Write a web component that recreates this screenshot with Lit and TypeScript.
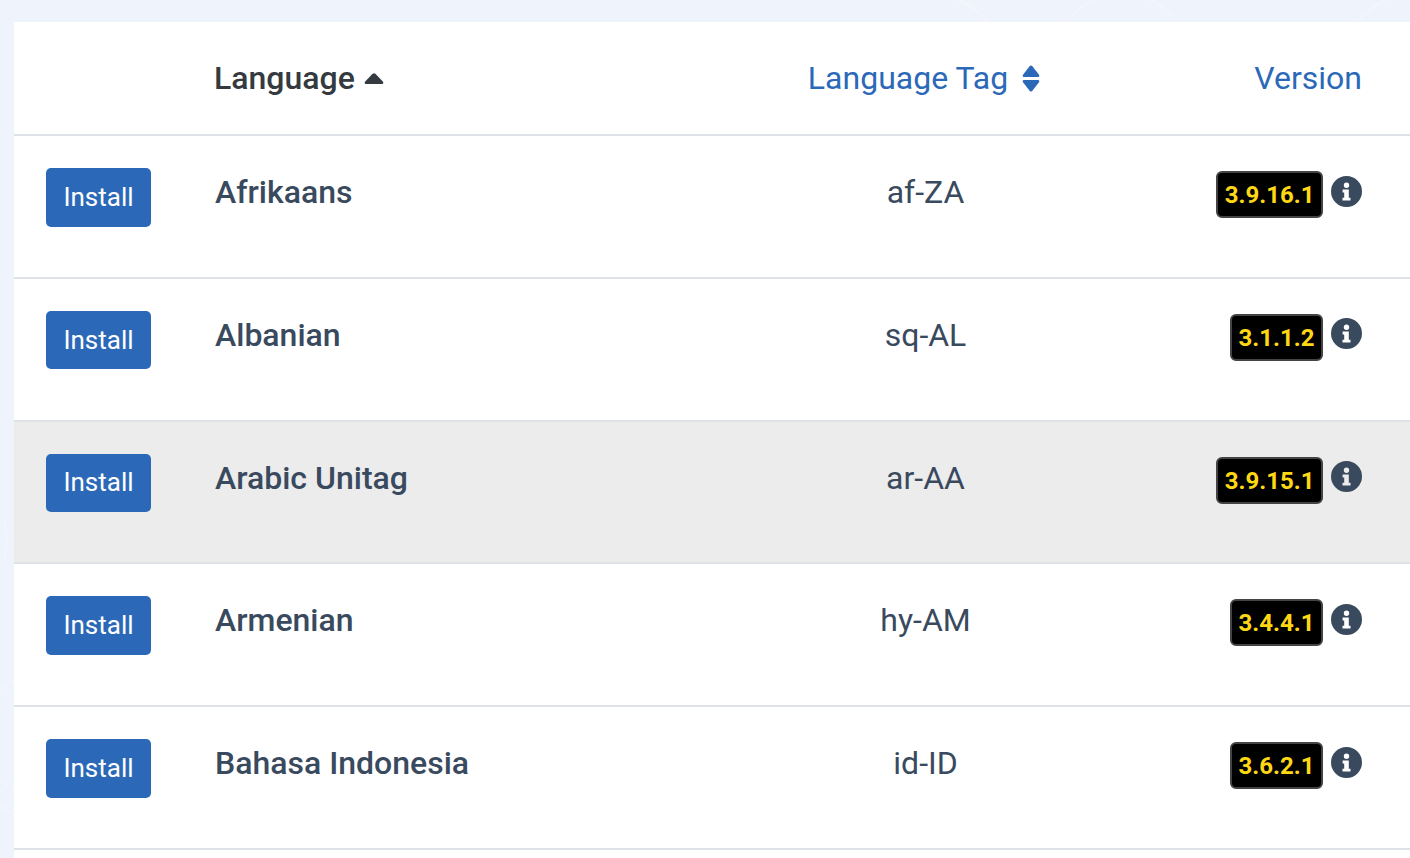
import { LitElement, html, css, svg } from "lit";
import { customElement } from "lit/decorators.js";

const rows = [
  { name: "Afrikaans", tag: "af-ZA", version: "3.9.16.1" },
  { name: "Albanian", tag: "sq-AL", version: "3.1.1.2" },
  { name: "Arabic Unitag", tag: "ar-AA", version: "3.9.15.1", hover: true },
  { name: "Armenian", tag: "hy-AM", version: "3.4.4.1" },
  { name: "Bahasa Indonesia", tag: "id-ID", version: "3.6.2.1" },
];

@customElement("app-root")
export class AppRoot extends LitElement {
  static styles = css`
    :host {
      display: block;
      position: relative;
      width: 1410px;
      height: 858px;
      overflow: hidden;
      background: #eff4fc;
      font-family: Roboto, "Liberation Sans", sans-serif;
    }
    .decor {
      position: absolute;
      inset: 0;
      width: 1410px;
      height: 858px;
      fill: none;
      stroke: #f3f6fc;
      stroke-width: 1.5;
    }
    .page {
      position: relative;
      padding: 22px 0 0 14px;
    }
    .card {
      background: #fff;
      height: 836px;
    }
    .row {
      display: grid;
      grid-template-columns: 201px 620px 181px 394px;
      height: 142.75px;
      box-sizing: border-box;
      border-bottom: 2px solid #dee2e6;
      color: #3a4a5e;
      font-size: 32px;
    }
    .row.head {
      height: 114px;
      align-items: center;
    }
    .row.hover {
      background: #ececec;
    }
    .cell {
      padding-top: 34px;
      line-height: 45px;
      white-space: nowrap;
    }
    .btn-cell {
      padding: 32px 0 0 32px;
    }
    button {
      display: block;
      width: 105px;
      height: 58.5px;
      border: 0;
      border-radius: 5px;
      background: #2b69b8;
      color: #fff;
      font: 400 26px Roboto, sans-serif;
      padding: 0 0 1px;
    }
    .name {
      font-weight: 500;
    }
    .tag {
      text-align: center;
    }
    .version {
      display: flex;
      justify-content: flex-end;
      align-items: flex-start;
      gap: 8px;
      padding: 35px 48px 0 0;
    }
    .badge {
      box-sizing: border-box;
      height: 47px;
      padding: 0 6.5px;
      border: 2px solid #444;
      border-radius: 6px;
      background: #000;
      color: #ffd814;
      font-size: 24px;
      font-weight: 700;
      line-height: 45px;
    }
    .info {
      width: 31px;
      height: 31px;
      margin-top: 4.5px;
      flex: none;
    }
    .th {
      font-size: 32px;
      line-height: 48px;
      white-space: nowrap;
      display: flex;
      align-items: center;
      gap: 9px;
      color: #2b69b8;
    }
    .th.sorted {
      color: #343a40;
      font-weight: 500;
      margin-left: -1px;
    }
    .th.center {
      gap: 13px;
      justify-content: center;
      transform: translateX(-1px);
    }
    .th.right {
      justify-content: flex-end;
      padding-right: 48px;
    }
    .caret {
      width: 20px;
      height: 11px;
      fill: currentColor;
      flex: none;
    }
    .sort {
      width: 20px;
      height: 27px;
      fill: currentColor;
      flex: none;
    }
  `;

  render() {
    return html`<svg class="decor" viewBox="0 0 1410 858">
        ${svg`
          <path d="M958 0 Q978 9 988 22" />
          <circle cx="1122" cy="62" r="68" />
          <path d="M1358 22 Q1368 8 1386 0" />
          <path d="M0 690 L14 680 M0 780 L14 790 M0 806 L14 815" />
          <path d="M4 520 Q10 540 4 560" />
        `}
      </svg>
      <div class="page">
        <div class="card">
          <div class="row head">
            <div></div>
            <div class="th sorted">
              Language
              <svg class="caret" viewBox="0 0 20 11">
                <path d="M1.2 8.6 L8.6 0.8 Q10 -0.4 11.4 0.8 L18.8 8.6 Q20.2 10.6 18 11 L2 11 Q-0.2 10.6 1.2 8.6 Z" />
              </svg>
            </div>
            <div class="th center">
              Language Tag
              <svg class="sort" viewBox="0 0 20 27">
                <path d="M2.2 9.4 L8.8 1 Q10 -0.2 11.2 1 L17.8 9.4 Q19.2 11.8 17 12 L3 12 Q0.8 11.8 2.2 9.4 Z" />
                <path d="M2.2 17.6 L8.8 26 Q10 27.2 11.2 26 L17.8 17.6 Q19.2 15.2 17 15 L3 15 Q0.8 15.2 2.2 17.6 Z" />
              </svg>
            </div>
            <div class="th right">Version</div>
          </div>
          ${rows.map(
            (r) => html`<div class="row ${r.hover ? "hover" : ""}">
              <div class="btn-cell"><button>Install</button></div>
              <div class="cell name">${r.name}</div>
              <div class="cell tag">${r.tag}</div>
              <div class="version">
                <span class="badge">${r.version}</span>
                <svg class="info" viewBox="0 0 31 31">
                  <path
                    fill-rule="evenodd"
                    fill="#3a4a5e"
                    d="M15.5 0a15.5 15.5 0 1 0 0 31a15.5 15.5 0 0 0 0-31ZM15.5 6.6a2.7 2.7 0 1 1 0 5.4a2.7 2.7 0 0 1 0-5.4ZM11.6 13.6h6.2v8.2h1.7v2.8h-8v-2.8h1.7v-5.4h-1.6Z"
                  />
                </svg>
              </div>
            </div>`
          )}
        </div>
      </div>`;
  }
}
